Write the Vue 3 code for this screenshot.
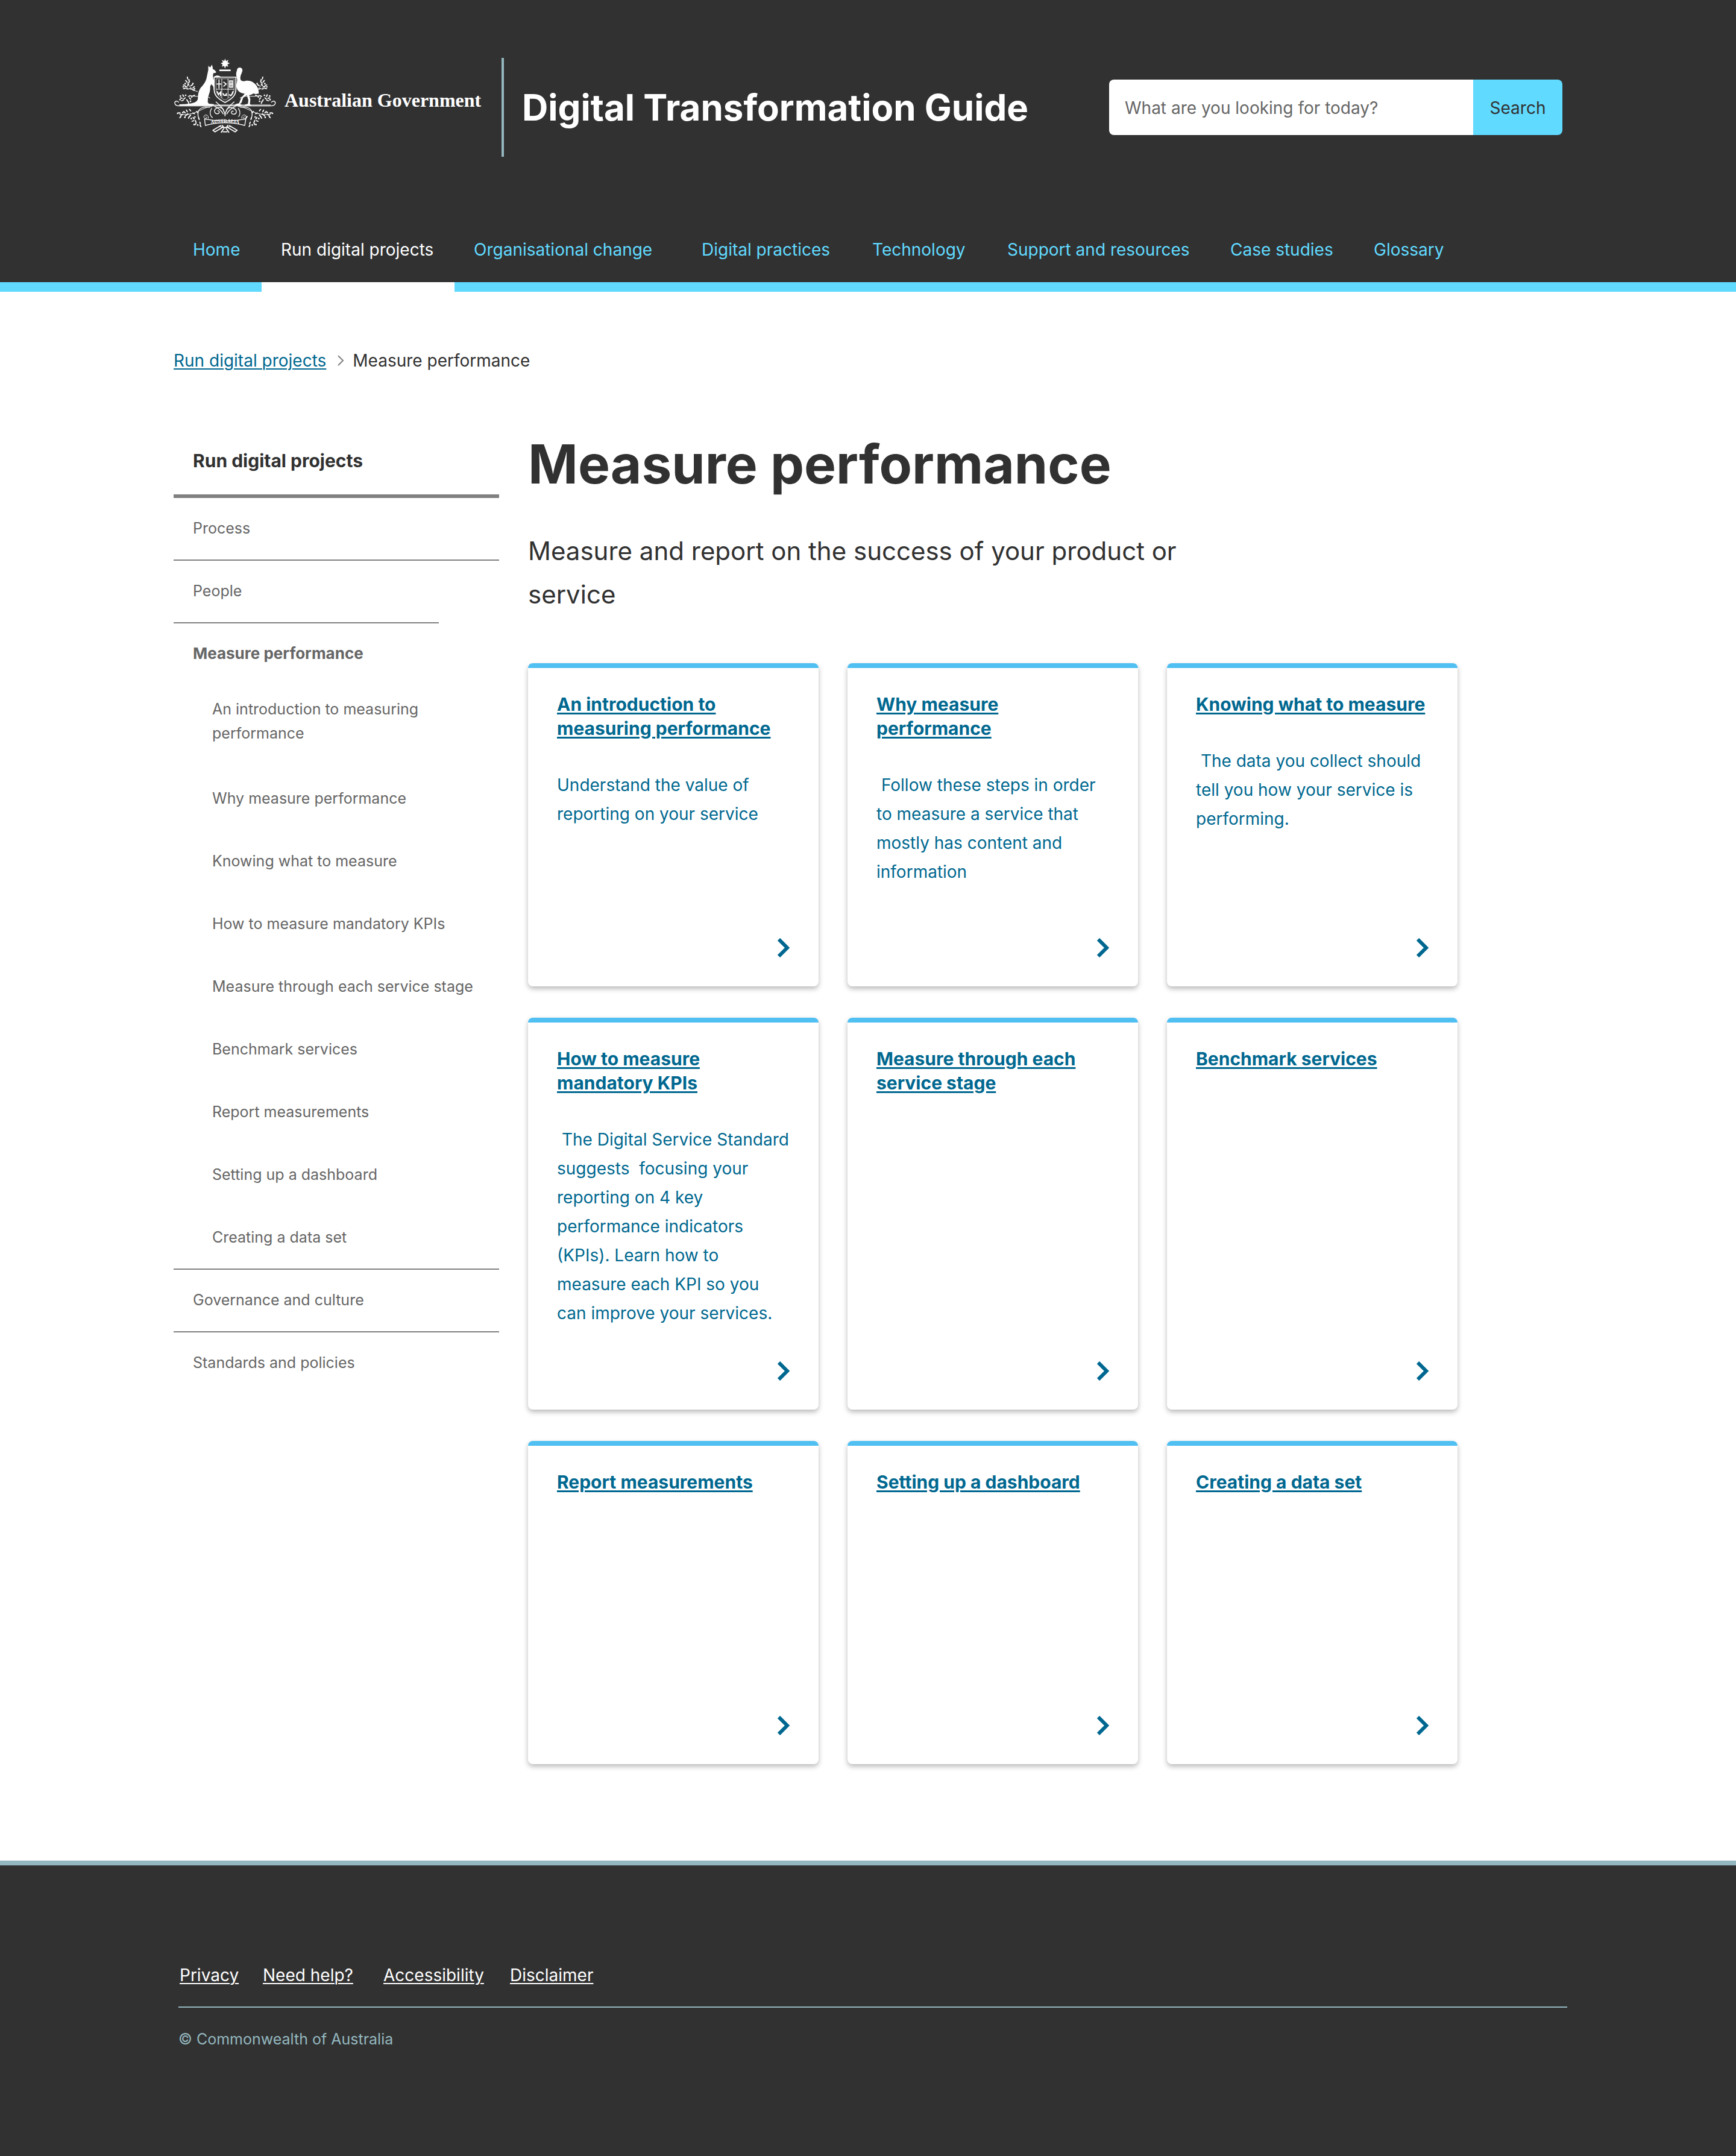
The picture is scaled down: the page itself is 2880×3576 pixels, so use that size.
<script setup>
const navItems = [
  { label: 'Home' },
  { label: 'Run digital projects', active: true },
  { label: 'Organisational change' },
  { label: 'Digital practices' },
  { label: 'Technology' },
  { label: 'Support and resources' },
  { label: 'Case studies' },
  { label: 'Glossary' },
]

const sectionTopics = [
  'An introduction to measuring performance',
  'Why measure performance',
  'Knowing what to measure',
  'How to measure mandatory KPIs',
  'Measure through each service stage',
  'Benchmark services',
  'Report measurements',
  'Setting up a dashboard',
  'Creating a data set',
]

const cards = [
  { title: 'An introduction to measuring performance', text: 'Understand the value of reporting on your service' },
  { title: 'Why measure performance', text: ' Follow these steps in order to measure a service that mostly has content and information' },
  { title: 'Knowing what to measure', text: ' The data you collect should tell you how your service is performing.' },
  { title: 'How to measure mandatory KPIs', text: ' The Digital Service Standard suggests  focusing your reporting on 4 key performance indicators (KPIs). Learn how to measure each KPI so you can improve your services.' },
  { title: 'Measure through each service stage' },
  { title: 'Benchmark services' },
  { title: 'Report measurements' },
  { title: 'Setting up a dashboard' },
  { title: 'Creating a data set' },
]

const footerLinks = ['Privacy', 'Need help?', 'Accessibility', 'Disclaimer']

// Wattle leaves of the crest's left half: x, y, rotation. The right half mirrors them.
const leaves = [
  [119, 150, 80], [113, 166, 50], [127, 170, -60], [103, 186, 20], [112, 194, 10], [122, 184, -50],
  [140, 186, -30], [150, 196, -40], [104, 202, -10], [118, 204, 10], [134, 204, 20], [148, 210, 30],
  [98, 238, 60], [88, 250, 10], [104, 252, -40], [118, 262, 60], [124, 272, 70], [132, 252, 50],
  [94, 262, -20], [128, 240, -20], [150, 238, -20],
  [78, 324, 10], [90, 334, -20], [84, 344, -50], [104, 320, 40], [116, 314, 60], [112, 336, -40],
  [132, 310, 50], [132, 338, -50], [126, 346, -60], [150, 350, 50], [146, 364, -20], [160, 366, 70],
  [160, 378, -60], [182, 374, 70], [184, 388, 60], [168, 320, 40], [150, 326, 20], [176, 352, 70],
]
const blossoms = [
  [108, 178], [126, 160], [146, 178], [154, 204], [98, 194], [84, 240], [110, 236], [82, 258],
  [134, 266], [140, 244], [70, 326], [96, 322], [106, 346], [120, 330], [138, 352], [156, 344], [170, 384], [152, 382],
]
</script>

<template>
  <div class="page">
    <header class="header">
      <div class="container masthead">
        <a class="brand" href="#">
          <svg class="crest" viewBox="50 50 510 381" role="img" aria-label="Commonwealth Coat of Arms">
            <g fill="#fff">
              <path d="M306 54l5 12 12-6-5 12 12 5-12 5 4 12-11-4-5 13-5-13-11 4 4-12-10-5 12-5-6-12 12 6z" />
              <path d="M278 108h56v8h-56z" />
              <path d="M220 87l9 8 4 2 7-13 5 13-1 8c8 3 15 9 18 16-2 5-10 4-14 5-3 10-2 20 0 30 6 10 12 22 12 34l-6 18-5 0c2-12-4-22-12-26l-5 10c1 14-1 26-5 36l-6 20-1 22 5 8 25 2v6H80l-2-5c25 0 55-2 76-9 10-4 16-10 17-20 0-25 5-44 18-58 14-15 22-28 26-48l8-38c-1-8-1-12 1-15z" />
              <path d="M250 146c8-12 28-10 36 0z" />
              <path d="M366 107c3-9 14-12 22-6 6 6 6 14 1 24-6 14-10 26-4 36 6 6 16 6 24 3 20-4 40 6 52 22 8 12 13 24 13 42l-16 2-12-3c-6 6-14 8-20 8l6 20-2 26 8 5h-34l2-4 14-3 2-20-8-24-18 14-8 24-8 8h6l4 5h-36l4-6 18-4 10-26 18-22c-18-2-34-10-40-28-5-16 4-30 2-44-3-14-8-26-1-42z" />
            </g>
            <g fill="none" stroke="#fff" stroke-width="4">
              <path d="M252 146h108v60c0 30-16 46-54 66-38-20-54-36-54-66z" fill="#313131" stroke-width="5" />
              <path d="M261 154h90v50c0 26-14 40-45 56-31-16-45-30-45-56z" stroke-width="2" />
              <path d="M261 206h90M290 154v94M321 154v94" stroke-width="3" />
              <path d="M276 158v44M264 180h24M298 170l14 10-14 12M328 164h16v32h-16zM336 164v32M328 180h16" stroke-width="5" />
              <path d="M266 216l8 16 10-12v20M296 226q8 22 18 0M298 236h18M326 232q12 14 20-16" stroke-width="6" />
              <path d="M76 272c-8-12-22-6-20 4 2 10 12 13 24 13h452c12 0 22-3 24-13 2-10-12-16-20-4" />
              <path d="M78 284h456" stroke-width="3" />
              <path d="M306 340c0-30-20-50-46-72M306 340c0-30 20-50 46-72M298 330c-10-18-22-30-44-38M314 330c10-18 22-30 44-38" />
              <path d="M300 318c-2-26-28-24-42-14-10 10-2 26 12 24 12-4 8-18-2-14M312 318c2-26 28-24 42-14 14 10 10 28-8 26-14-4-8-20 2-14" />
              <path d="M240 300c-12 18-10 36 4 48M372 300c12 18 10 36-4 48" />
              <path d="M230 296c-30-6-54 4-58 24-4 14 2 24 4 36M382 296c30-6 54 4 58 24 4 14-2 24-4 36" />
              <path d="M240 292c-50 2-80 50-162 38M372 292c50 2 80 50 162 38" stroke-width="3" />
              <path d="M232 250c-30-20-70 0-100-14M380 250c30-20 70 0 100-14M170 218c-30-8-46-30-56-54M442 218c30-8 46-30 56-54" stroke-width="3" />
            </g>
            <g v-for="side in ['left', 'right']" :key="side" fill="#fff" :transform="side === 'right' ? 'translate(612 0) scale(-1 1)' : undefined">
              <ellipse v-for="([x, y, turn], i) in leaves" :key="'l' + i" :cx="x" :cy="y" rx="8" ry="3" :transform="`rotate(${turn} ${x} ${y})`" />
              <circle v-for="([x, y], i) in blossoms" :key="'b' + i" :cx="x" :cy="y" r="4" />
            </g>
            <g fill="none" stroke="#fff" stroke-width="4">
              <path d="M204 354q102 20 204 0l10-14M204 354l4 32q98-26 196 0l8-46" fill="#313131" />
              <path d="M222 352c4-14-8-22-18-16-8 8 0 20 8 16 6-6 0-10-4-8M390 352c-4-14 8-22 18-16 8 8 0 20-8 16-6-6 0-10 4-8" stroke-width="3" />
              <path d="M286 386l-40 24 10 8 40-24M326 386l40 24-10 8-40-24M290 384l12 14-16 24M322 384l-12 14 16 24M278 390q28 14 56 0M294 418h24" stroke-width="5" />
            </g>
            <defs><path id="scroll-line" d="M212 383q94-24 188 0" /></defs>
            <text class="crest-motto"><textPath href="#scroll-line" startOffset="50%" text-anchor="middle">AUSTRALIA</textPath></text>
          </svg>
          <span class="government">Australian Government</span>
        </a>
        <div class="site-title">Digital Transformation Guide</div>
        <form class="search" role="search" @submit.prevent>
          <input type="search" aria-label="Search the guide" placeholder="What are you looking for today?" />
          <button type="submit">Search</button>
        </form>
      </div>
      <nav class="main-nav" aria-label="Main">
        <ul class="container">
          <li v-for="item in navItems" :key="item.label">
            <a href="#" :class="{ active: item.active }" :aria-current="item.active ? 'true' : undefined">{{ item.label }}</a>
          </li>
        </ul>
      </nav>
    </header>

    <nav class="container breadcrumb" aria-label="Breadcrumb">
      <a href="#">Run digital projects</a>
      <svg viewBox="0 0 12 18" aria-hidden="true"><path d="M2 1l8 8-8 8" fill="none" stroke="#808080" stroke-width="2" /></svg>
      <span aria-current="page">Measure performance</span>
    </nav>

    <div class="container layout">
      <aside class="sidebar">
        <h2><a href="#">Run digital projects</a></h2>
        <ul class="menu">
          <li><a href="#">Process</a></li>
          <li><a href="#">People</a></li>
          <li class="current">
            <a href="#" aria-current="page">Measure performance</a>
            <ul class="submenu">
              <li v-for="topic in sectionTopics" :key="topic"><a href="#">{{ topic }}</a></li>
            </ul>
          </li>
          <li><a href="#">Governance and culture</a></li>
          <li><a href="#">Standards and policies</a></li>
        </ul>
      </aside>

      <main>
        <h1>Measure performance</h1>
        <p class="lead">Measure and report on the success of your product or service</p>
        <div class="cards">
          <article v-for="card in cards" :key="card.title" class="card">
            <h3><a href="#">{{ card.title }}</a></h3>
            <p v-if="card.text">{{ card.text }}</p>
            <svg viewBox="0 0 20 32" aria-hidden="true"><path d="M2 2l14 14L2 30" fill="none" stroke="#006890" stroke-width="6" /></svg>
          </article>
        </div>
      </main>
    </div>

    <footer class="footer">
      <div class="footer-inner">
        <ul>
          <li v-for="link in footerLinks" :key="link"><a href="#">{{ link }}</a></li>
        </ul>
        <p>© Commonwealth of Australia</p>
      </div>
    </footer>
  </div>
</template>

<style>
body {
  margin: 0;
}
</style>

<style scoped>
.page {
  background: #fff;
  color: #313131;
  font-family: Inter, "Open Sans", sans-serif;
  font-size: 28px;
  line-height: 48px;
}
.page * {
  box-sizing: border-box;
}
a {
  color: inherit;
}
ul {
  list-style: none;
  margin: 0;
  padding: 0;
}
h1, h2, h3, p {
  margin: 0;
}
.container {
  width: 80%;
  margin: 0 auto;
}

.header {
  background: #313131;
  color: #fff;
}
.masthead {
  display: flex;
  align-items: flex-start;
  padding-top: 96px;
}
.brand {
  display: flex;
  align-items: flex-start;
  width: 548px;
  height: 164px;
  flex: none;
  border-right: 4px solid #94b7bf;
  text-decoration: none;
}
.crest {
  width: 170px;
  height: 127px;
  margin-right: 14px;
  flex: none;
}
.crest-motto {
  fill: #fff;
  font: bold 24px "Liberation Serif", serif;
}
.government {
  padding-top: 46px;
  font: bold 32px/48px "Liberation Serif", serif;
  white-space: nowrap;
}
.site-title {
  margin-left: 30px;
  padding-top: 42px;
  font-size: 60px;
  line-height: 80px;
  font-weight: 700;
  white-space: nowrap;
}
.search {
  display: flex;
  width: 752px;
  height: 92px;
  margin: 36px 0 0 auto;
  border-radius: 8px;
  overflow: hidden;
}
.search input {
  flex: 1;
  min-width: 0;
  padding: 2px 26px 0;
  border: 0;
  background: #fff;
  color: #313131;
  font: inherit;
  appearance: none;
}
.search input::placeholder {
  color: #666;
  opacity: 1;
}
.search button {
  width: 148px;
  padding: 2px 0 0;
  border: 0;
  background: #61daff;
  color: #313131;
  font: inherit;
}

.main-nav {
  margin-top: 98px;
  background: linear-gradient(#61daff, #61daff) bottom / 100% 16px no-repeat;
}
.main-nav ul {
  display: grid;
  grid-template-columns: 146px 320px 378px 283px 224px 370px 238px auto;
}
.main-nav a {
  display: block;
  padding: 32px 0 30px 32px;
  border-bottom: 16px solid #61daff;
  color: #61daff;
  text-decoration: none;
  white-space: nowrap;
}
.main-nav a.active {
  border-color: #fff;
  color: #fff;
}

.breadcrumb {
  display: flex;
  align-items: center;
  padding: 90px 0 94px;
}
.breadcrumb svg {
  width: 12px;
  height: 18px;
  margin: 0 14px 0 18px;
}
.breadcrumb a {
  color: #006890;
  text-decoration-thickness: 2px;
  text-underline-offset: 3px;
}

.layout {
  display: grid;
  grid-template-columns: 540px minmax(0, 1542px);
  column-gap: 48px;
  align-items: start;
  padding-bottom: 160px;
}
.sidebar {
  color: #666;
  font-size: 25px;
  line-height: 40px;
}
.sidebar a {
  text-decoration: none;
}
.sidebar h2 {
  padding: 24px 32px 32px;
  border-bottom: 6px solid #808080;
  color: #313131;
  font-size: 30px;
  line-height: 48px;
}
.menu > li > a {
  display: block;
  padding: 30px 32px 32px;
  border-bottom: 2px solid #808080;
}
.menu > li:nth-child(2) > a {
  width: 440px;
}
.menu > li:last-child > a {
  border-bottom: 0;
}
.menu > .current {
  border-bottom: 2px solid #808080;
}
.menu > .current > a {
  padding-bottom: 20px;
  border-bottom: 0;
  font-size: 26px;
  font-weight: 700;
}
.submenu {
  padding: 32px 40px 32px 64px;
}
.submenu li + li {
  padding-top: 64px;
}
.submenu li:first-child {
  padding-bottom: 4px;
}

h1 {
  font-size: 89px;
  line-height: 108px;
  font-weight: 700;
}
.lead {
  max-width: 1120px;
  margin-top: 54px;
  font-size: 42px;
  line-height: 72px;
}
.cards {
  display: grid;
  grid-template-columns: repeat(3, 1fr);
  gap: 52px 48px;
  margin-top: 78px;
}
.card {
  display: flex;
  flex-direction: column;
  min-height: 536px;
  padding: 40px 48px 48px;
  border-top: 8px solid #50bff1;
  border-radius: 8px;
  box-shadow: 0 4px 8px rgba(0, 0, 0, 0.28);
  color: #006890;
}
.card h3 {
  font-size: 30px;
  line-height: 40px;
}
.card h3 a {
  text-decoration-thickness: 3px;
  text-underline-offset: 3px;
}
.card p {
  margin-top: 50px;
  margin-bottom: 56px;
  white-space: pre-wrap;
}
.card svg {
  width: 20px;
  height: 32px;
  margin: auto 0 0 auto;
  flex: none;
}

.footer {
  min-height: 490px;
  border-top: 8px solid #94b7bf;
  background: #313131;
  color: #fff;
}
.footer-inner {
  width: 80%;
  margin-left: 296px;
  padding-top: 158px;
}
.footer ul {
  display: grid;
  grid-template-columns: 138px 200px 210px auto;
  padding: 0 0 28px 2px;
  border-bottom: 2px solid #94b7bf;
}
.footer a {
  text-decoration-thickness: 2px;
  text-underline-offset: 3px;
}
.footer p {
  padding-top: 32px;
  color: #94b7bf;
  font-size: 25px;
  line-height: 40px;
}
</style>
